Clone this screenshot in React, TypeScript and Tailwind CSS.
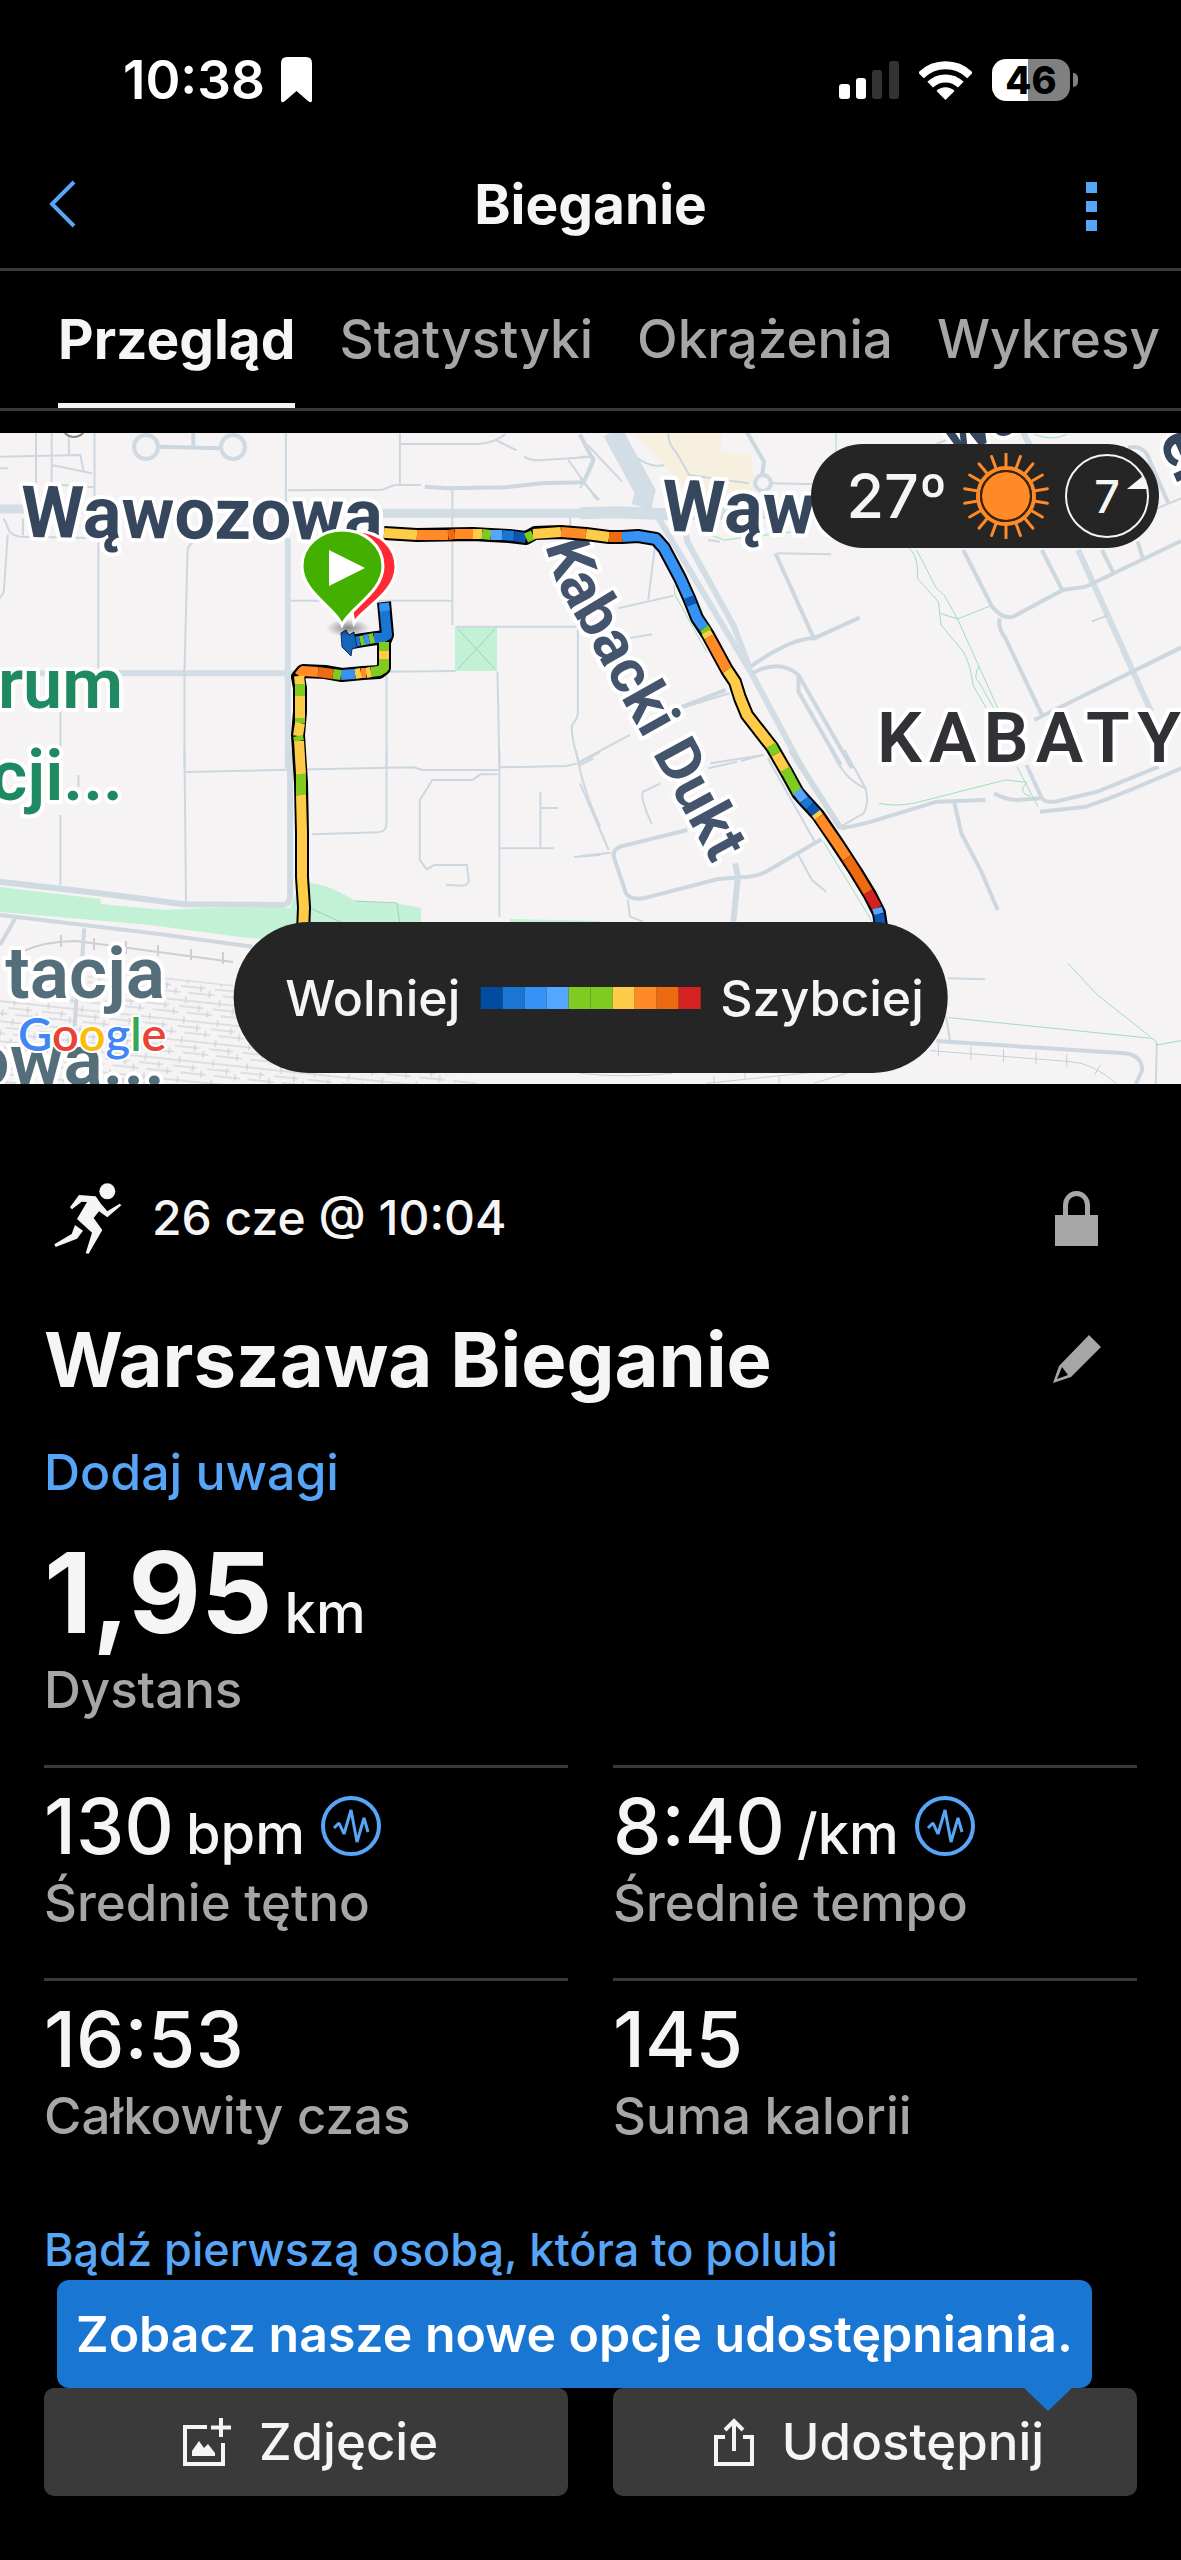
import React from "react";

const BLUE = "#3693f5";
const SKY = "#55a6ff";
const NAVY = "#0d55ad";
const MID = "#1976d2";
const GREEN = "#7fcb1f";
const YELLOW = "#ffcc4a";
const ORANGE = "#ff8a26";
const DEEP = "#ee6a10";
const RED = "#d42222";

const paceScale = ["#004c9f", MID, BLUE, SKY, GREEN, GREEN, YELLOW, ORANGE, DEEP, RED];

const routeOutlines = [
  "M384 169 L387 202 L384 209 L384 235 L379 239 L363 240 L342 242 L325 239 L303 238 L298 244 L300 255 L300 279 L298 302 L301 350 L302 400 L302 444 L304 474 L303 500",
  "M384 204 L363 207 L346 210",
  "M384 100 L417 102 L473 101 L490 102 L509 103 L526 105 L535 100 L561 99 L586 101 L609 104 L622 104 L638 103 L656 106 L664 115 L680 145 L689 165 L697 185 L708 202 L727 237 L735 249 L740 265 L747 282 L772 314 L787 340 L798 360 L806 369 L818 382 L837 410 L856 439 L870 462 L879 480 L882 500",
];

const routeSegments: [string, string][] = [
  [MID, "M384 172 L387 202 L382 205 L374 205"],
  [BLUE, "M384 170 L385 178"],
  [GREEN, "M374 205 L369 206"],
  [BLUE, "M369 206 L364 207"],
  [GREEN, "M364 207 L360 208"],
  [MID, "M360 208 L346 210"],
  [GREEN, "M384 209 L384 218"],
  [YELLOW, "M384 218 L384 227"],
  [GREEN, "M384 226 L384 235 L379 238 L371 239"],
  [YELLOW, "M371 239 L366 240"],
  [ORANGE, "M366 240 L361 240"],
  [YELLOW, "M361 240 L355 241"],
  [BLUE, "M355 241 L341 242"],
  [GREEN, "M341 242 L333 241"],
  [DEEP, "M333 241 L318 239"],
  [ORANGE, "M318 239 L303 238 L299 243"],
  [YELLOW, "M299 243 L300 252"],
  [GREEN, "M300 251 L300 263"],
  [YELLOW, "M300 263 L300 286"],
  [GREEN, "M300 285 L300 290"],
  [YELLOW, "M300 290 L298 303"],
  [GREEN, "M298 303 L299 308"],
  [YELLOW, "M299 308 L301 341"],
  [GREEN, "M301 341 L301 362"],
  [YELLOW, "M301 362 L302 400 L302 444 L304 474 L303 500"],
  [YELLOW, "M384 100 L417 102"],
  [ORANGE, "M417 102 L448 102"],
  [DEEP, "M448 102 L455 101"],
  [ORANGE, "M455 101 L473 101"],
  [YELLOW, "M473 101 L482 101"],
  [GREEN, "M482 101 L491 102"],
  [SKY, "M491 102 L502 102"],
  [MID, "M502 102 L514 103"],
  [NAVY, "M514 103 L526 105"],
  [GREEN, "M526 105 L533 102"],
  [YELLOW, "M533 101 L561 99"],
  [ORANGE, "M561 99 L586 101"],
  [YELLOW, "M586 101 L609 104"],
  [DEEP, "M609 104 L622 104"],
  [BLUE, "M622 104 L638 103 L656 106 L664 115 L680 145 L689 165 L697 185 L704 195"],
  [NAVY, "M689 164 L692 172"],
  [GREEN, "M704 195 L707 199"],
  [YELLOW, "M706 199 L709 204"],
  [ORANGE, "M709 204 L727 237"],
  [YELLOW, "M727 237 L735 249 L740 265 L747 282 L772 314"],
  [GREEN, "M771 312 L776 321"],
  [YELLOW, "M776 321 L787 340"],
  [GREEN, "M785 336 L798 360"],
  [SKY, "M797 358 L804 367"],
  [MID, "M804 367 L810 373"],
  [NAVY, "M810 373 L817 381"],
  [YELLOW, "M816 380 L819 384"],
  [ORANGE, "M819 384 L837 410 L847 425"],
  [DEEP, "M847 425 L856 439 L868 459"],
  [RED, "M868 459 L877 475"],
  [SKY, "M877 475 L879 481"],
  [NAVY, "M879 481 L882 500"],
];

type Layer = { color: string; width: number; d: string };

/* Street layers are digitised per tile; each tile carries its own origin and scale. */
const tiles: { transform: string; layers: Layer[] }[] = [
  {
    transform: "translate(0 -8) scale(.3827 .3333)",
    layers: [
      { color: "#d3dde5", width: 9, d: "M0 252 H230 M1000 265 H1600" },
      { color: "#d3dde5", width: 6, d: "M752 340 V1030 M80 745 H770" },
      {
        color: "#cdd7e0",
        width: 2,
        d: "M94 20 V185 M135 20 V120 L240 145 M135 120 V190 M180 20 V88 M0 95 L210 90 L218 135 M0 130 H20 M160 180 L245 187 M247 20 V250 M747 20 V260 M752 196 L1000 194 L1030 180 H1100 M1045 20 V180 M1045 57 H1250 Q1290 55 1320 28 M1295 45 L1350 76 M1370 95 Q1385 107 1410 106 L1550 95 M1485 105 L1560 225 M1182 185 V600 M760 527 H1182 M257 340 V740 M520 290 L515 340 Q490 360 490 380 L482 740 V1030 M158 860 V1030 M1010 740 V1030 M1010 740 L1190 738 M1190 605 H1510 V860 Q1510 880 1495 900 Q1490 930 1515 1020 M1300 740 L1305 1030 M0 520 L10 500 L20 330 M10 280 L25 320 Q40 340 80 335 L260 340 M60 280 V330 M1490 275 V310",
      },
      {
        color: "#cdd7e0",
        width: 4,
        d: "M1110 185 L1170 190 L1320 187 L1415 175 L1525 172 L1550 105 L1515 28 M415 65 L577 70 M505 20 V65",
      },
    ],
  },
  {
    transform: "translate(580 -8) scale(.3833 .3333)",
    layers: [
      { color: "#d3dde5", width: 20, d: "M85 20 L170 200 L160 245" },
      { color: "#d3dde5", width: 12, d: "M0 265 L100 262 L225 268 L600 262" },
      {
        color: "#d3dde5",
        width: 6,
        d: "M200 270 L450 750 L580 1030 M270 290 L280 350 L400 600 L440 720 M1155 20 L1205 130 M1300 375 L1490 860",
      },
      {
        color: "#cdd7e0",
        width: 4,
        d: "M435 20 L480 110 L475 150 M510 385 L610 640 Q550 640 445 725 M610 640 L730 578 M450 745 Q520 700 570 750 L710 1030 M570 750 V800 L680 1020 M235 860 L380 795 M1000 375 L1075 545 Q1105 585 1130 575 L1260 495 L1320 485 L1568 348 M1095 580 Q1090 610 1110 640 L1205 870 M1185 885 L1568 668 M1205 375 L1258 495 M1362 375 L1390 440 M1455 350 L1468 400 M1430 68 Q1465 60 1480 90 L1535 235",
      },
      {
        color: "#cdd7e0",
        width: 2,
        d: "M0 95 H35 Q45 110 0 190 M20 60 L110 170 M0 160 L50 225 M230 20 Q230 60 250 80 L285 150 L440 175 M150 100 Q190 130 220 120 M500 175 L620 178 M195 370 L178 525 M100 550 L245 512 M115 642 L188 628 M235 860 L390 805 M0 1010 L130 930 M340 1015 L480 990 M1335 590 L1375 572 M515 385 L655 388 M335 345 L365 350 M930 55 L1000 30 M1505 250 L1568 220",
      },
      {
        color: "#9edfbd",
        width: 1,
        d: "M860 370 Q885 400 880 460 L935 530 L942 600 L1000 680 Q1020 720 1025 780 L1065 860 M878 375 L930 490 L950 510 L985 582 L1090 850 M940 565 L985 582 L1070 543 M1040 725 Q1025 760 1040 770 L1080 850 M245 480 L248 510 L330 680 M320 320 L375 345 L560 320 M668 20 V80 M1185 28 Q1230 50 1270 28",
      },
    ],
  },
  {
    transform: "translate(0 317) scale(.3827 .3333)",
    layers: [
      { color: "#d0dae2", width: 6, d: "M0 395 L260 430 L480 463 L740 465 Q758 460 758 440 V0" },
      {
        color: "#cdd7e0",
        width: 2,
        d: "M158 195 V405 M205 75 V110 M482 0 L486 455 M486 66 L1080 52 L1105 60 H1305 M1010 0 V215 Q1010 245 990 247 L815 253 M1305 0 V500 M1305 52 L1480 48 Q1520 40 1568 5 M1505 0 Q1520 110 1568 230 M1300 73 H1255 L1235 90 H1130 L1097 150 V330 L1115 358 L1135 345 H1220 L1225 395 Q1220 407 1205 407 L1165 404 M1412 125 V292 M1412 174 H1458 M1308 295 H1448 M1500 321 L1568 315",
      },
      { color: "#d0d7df", width: 4, d: "M0 495 L400 550 L660 590 M40 505 L0 585 M220 535 L215 620 M200 740 L195 830" },
    ],
  },
  {
    transform: "translate(580 317) scale(.3833 .3333)",
    layers: [
      {
        color: "#cdd7e0",
        width: 4,
        d: "M280 240 L105 290 Q85 300 88 320 L120 430 Q130 450 165 445 L360 387 L420 382 Q460 382 490 362 L630 268 M975 150 L995 250 L1045 360 L1090 480 M680 235 Q720 228 760 215 L930 155 L1058 150 M1080 130 Q1110 150 1140 150 L1200 145 M1165 45 L1205 145 Q1215 158 1240 155 L1350 125 L1510 50 M1200 185 L1320 170 Q1400 140 1568 55 M930 873 L1420 910 Q1465 915 1467 960 L1450 1002",
      },
      { color: "#d0dae2", width: 6, d: "M405 340 L412 380 L400 515 M550 0 L680 235" },
      {
        color: "#cdd7e0",
        width: 2,
        d: "M655 0 Q690 90 745 115 Q755 160 740 190 L680 230 M690 0 L745 115 M0 45 L35 25 M0 100 L75 300 M0 318 L80 308 M335 55 L410 35 M420 33 L475 15 M210 100 L165 125 Q155 140 187 222 M570 315 L605 390 L642 425 M490 25 L615 280 M125 450 L130 500 L165 515 M960 685 L1057 688 M955 800 L965 870 M1505 880 L1502 1002",
      },
      {
        color: "#c9ced6",
        width: 1,
        d: "M915 902 L1280 935 Q1340 940 1400 1002 M935 882 V920 M1020 890 V930 M1105 898 V936 M1190 906 V944 M1270 914 V952 M1358 945 L1342 975 M330 1000 L600 968 M430 970 V990 M610 1000 L700 968 M350 980 V1000 M520 980 V1000 M0 970 Q120 985 240 970",
      },
      {
        color: "#9edfbd",
        width: 1,
        d: "M780 160 Q820 170 870 160 L1110 90 L1165 97 Q1140 130 1175 138 M1140 50 L1195 170 M635 275 L765 520 M962 803 L1490 865 Q1505 870 1505 885 L1568 872 M1273 640 L1350 735 L1490 862",
      },
    ],
  },
];

function MapDrawing() {
  return (
    <svg
      viewBox="0 0 1181 651"
      preserveAspectRatio="xMidYMid slice"
      className="block h-full w-full font-['Roboto',sans-serif]"
      role="img"
      aria-label="Mapa trasy biegu"
    >
      <defs>
        <pattern id="yard" width="34" height="20" patternUnits="userSpaceOnUse" patternTransform="rotate(6)">
          <path d="M0 5H34M0 11H24M8 17H34M6 1V8M20 8V15M29 13V20" stroke="#c8c9d1" strokeWidth="1" fill="none" />
        </pattern>
        <radialGradient id="shadow">
          <stop offset="0" stopColor="#000" stopOpacity=".45" />
          <stop offset="1" stopColor="#000" stopOpacity="0" />
        </radialGradient>
        <path id="kabacki" d="M546 112 C552 145 566 168 583 196 C604 234 634 288 661 336 L726 456" />
      </defs>
      <rect width="1181" height="651" fill="#f5f3f4" />

      <path d="M635 0 H721 V20 H750 L755 50 V60 H690 Z" fill="#f7f0df" />
      <rect x="455" y="194" width="42" height="44" fill="#c3f1d5" />
      <path
        d="M0 454 L100 466 L101 471 L164 477 L206 475 L290 475 L300 450 L311 450 Q330 452 355 468 L400 471 L421 475 V492 L300 510 L240 504 L150 492 L0 479Z"
        fill="#c3f1d5"
      />
      <path d="M510 486 L600 488 V495 H510Z" fill="#c3f1d5" />
      <path d="M0 565 L110 538 L233 552 L300 600 L480 651 H0Z" fill="url(#yard)" />
      <path
        d="M21 519 Q45 508 76 508 L233 529 M61 502 V514 M94 505 V517 M126 508 V521 M158 512 V523 M191 516 V527 M223 519 V531"
        stroke="#cdcfd6"
        strokeWidth="2"
        fill="none"
      />

      {tiles.map((tile) => (
        <g key={tile.transform} transform={tile.transform} fill="none">
          {tile.layers.map((layer) => (
            <path key={layer.d} d={layer.d} stroke={layer.color} strokeWidth={layer.width} vectorEffect="non-scaling-stroke" />
          ))}
        </g>
      ))}
      <g fill="#f5f3f4" stroke="#d0dae2" strokeWidth="4">
        <circle cx="146" cy="14" r="12" />
        <circle cx="233" cy="14" r="12" />
        <circle cx="763" cy="50" r="8" />
      </g>
      <path d="M458 196 L495 236 M495 196 L458 236 M310 475 L345 491 M355 468 L397 470 L400 492" stroke="#a6cdb9" strokeWidth="1" fill="none" />
      <circle cx="74" cy="-8" r="12" fill="#fff" stroke="#8a8a8a" strokeWidth="2" />

      <g fill="#36475d" stroke="#fff" strokeWidth="8" strokeLinejoin="round" className="font-bold [paint-order:stroke]">
        <g fontSize="72">
          <text x="21" y="104" transform="rotate(.5 21 104)">Wąwozowa</text>
          <text x="662" y="98" transform="rotate(1 662 98)">Wąwo</text>
        </g>
        <text fontSize="64" x="952" y="24" transform="rotate(-22 952 24)">wa</text>
        <text fontSize="64" x="1158" y="6" transform="rotate(66 1158 6)">er</text>
        <text fontSize="61" fill="#44546c">
          <textPath href="#kabacki">Kabacki Dukt</textPath>
        </text>
        <text fontSize="71" x="877" y="329" fill="#303236" className="font-semibold tracking-widest">
          KABATY
        </text>
        <g fontSize="70" fill="#1f8a62" textAnchor="end" className="font-semibold">
          <text x="123" y="275">rum</text>
          <text x="123" y="367">cji...</text>
        </g>
        <g fontSize="73" fill="#546e7a" textAnchor="end" className="font-semibold">
          <text x="165" y="565">tacja</text>
          <text x="165" y="652">owa...</text>
        </g>
      </g>
      <text
        x="18"
        y="618"
        fontSize="47"
        stroke="#fff"
        strokeWidth="4"
        className="font-['Lato',sans-serif] font-semibold [paint-order:stroke]"
      >
        <tspan fill="#4285f4">G</tspan>
        <tspan fill="#ea4335">o</tspan>
        <tspan fill="#fbbc05">o</tspan>
        <tspan fill="#4285f4">g</tspan>
        <tspan fill="#34a853">l</tspan>
        <tspan fill="#ea4335">e</tspan>
      </text>

      <g fill="none" strokeLinejoin="round">
        {routeOutlines.map((d) => (
          <path key={d} d={d} stroke="#000" strokeWidth="14" />
        ))}
        {routeSegments.map(([color, d]) => (
          <path key={d} d={d} stroke={color} strokeWidth="10" />
        ))}
      </g>
      <path d="M341 200 L346 197 L349 202 L354 199 L357 214 L352 216 L351 223 L342 214Z" fill="#1565b8" stroke="#0a2f5a" strokeWidth="1" />
      <ellipse cx="348" cy="195" rx="22" ry="9" fill="url(#shadow)" />
      <path d="M354 190 C362 176 396 160 396 134 C396 114 380 99 358 98 L340 110Z" fill="#ff2a33" stroke="#fff" strokeWidth="3" />
      <path
        d="M342 192 C335 174 302 160 302 133 C302 113 320 97 342 97 C365 97 383 113 383 133 C383 160 350 174 342 192Z"
        fill="#43b000"
        stroke="#fff"
        strokeWidth="3"
      />
      <path d="M329 117 L365 135 L329 153Z" fill="#fff" />
    </svg>
  );
}

function SunIcon() {
  return (
    <svg viewBox="-43 -43 86 86" className="h-[86px] w-[86px]" stroke="#ff8a26" fill="none" aria-hidden="true">
      <circle r="24" fill="#ff8a26" stroke="none" />
      <circle r="28" stroke="#ff8a26" strokeWidth="4" />
      <circle r="25" stroke="#3a2410" strokeWidth="2" />
      {Array.from({ length: 18 }, (_, i) => (
        <path key={i} d="M0 -30V-42" strokeWidth="3" strokeLinecap="round" transform={`rotate(${i * 20})`} />
      ))}
    </svg>
  );
}

function WaveIcon() {
  return (
    <svg viewBox="0 0 60 60" className="h-[60px] w-[60px]" fill="none" stroke="#57a5f7" strokeWidth="4" aria-hidden="true">
      <circle cx="30" cy="30" r="28" />
      <path d="M13 32 L18 27 L23 38 L30 14 L36 46 L43 22 L47 36" strokeWidth="3" strokeLinejoin="bevel" />
    </svg>
  );
}

function StatusBar() {
  return (
    <div className="flex h-[160px] items-center justify-between pr-[103px] pl-[123px] text-white">
      <div className="flex items-center gap-4">
        <span className="text-[53px] leading-none font-semibold">10:38</span>
        <svg viewBox="0 0 31 46" className="h-[46px] w-[31px]" fill="currentColor" aria-hidden="true">
          <path d="M6 0H25Q31 0 31 6V43Q31 47 27 44L15.500 34L4 44Q0 47 0 43V6Q0 0 6 0Z" />
        </svg>
      </div>
      <div className="flex items-center gap-5">
        <svg viewBox="0 0 60 38" className="h-[38px] w-[60px]" fill="#fff" aria-hidden="true">
          <rect x="0" y="23" width="11" height="15" rx="3" />
          <rect x="17" y="17" width="10" height="21" rx="3" />
          <rect x="33" y="9" width="10" height="29" rx="3" fill="#333" />
          <rect x="50" y="0" width="10" height="38" rx="3" fill="#333" />
        </svg>
        <svg viewBox="0 0 53 39" className="h-[39px] w-[53px]" fill="none" stroke="#fff" strokeWidth="8" aria-hidden="true">
          <path d="M2 14.500A34.700 34.700 0 0 1 51 14.500M11.200 23.700A21.700 21.700 0 0 1 41.800 23.700" />
          <path d="M26.500 39L17.500 30A12.700 12.700 0 0 1 35.500 30Z" fill="#fff" stroke="none" />
        </svg>
        <div className="flex items-center gap-[3px]">
          <div className="flex h-[42px] w-[78px] items-center justify-center rounded-[14px] bg-linear-to-r from-white from-46% to-[#808080] to-46% text-[38px] leading-none font-extrabold text-black">
            46
          </div>
          <div className="h-[14px] w-[5px] rounded-r-full bg-[#808080]" />
        </div>
      </div>
    </div>
  );
}

const tabs = ["Przegląd", "Statystyki", "Okrążenia", "Wykresy"];

const stats = [
  { value: "130", unit: "bpm", label: "Średnie tętno", wave: true },
  { value: "8:40", unit: "/km", label: "Średnie tempo", wave: true },
  { value: "16:53", label: "Całkowity czas" },
  { value: "145", label: "Suma kalorii" },
];

export default function App() {
  return (
    <div className="min-h-screen overflow-hidden bg-black font-['Inter',sans-serif] text-[#f5f5f5]">
      <StatusBar />
      <header className="grid h-[111px] grid-cols-[1fr_auto_1fr] items-center border-b-[3px] border-[#3a3a3a] px-12 pb-5">
        <button aria-label="Wstecz" className="justify-self-start">
          <svg viewBox="0 0 28 48" className="h-[48px] w-[28px]" fill="none" stroke="#57a5f7" strokeWidth="4" aria-hidden="true">
            <path d="M26 2L4 24L26 46" />
          </svg>
        </button>
        <h1 className="text-[55px] leading-none font-bold">Bieganie</h1>
        <button aria-label="Więcej opcji" className="flex flex-col gap-2 justify-self-end pt-1 pr-9">
          <span className="size-[11px] bg-[#57a5f7]" />
          <span className="size-[11px] bg-[#57a5f7]" />
          <span className="size-[11px] bg-[#57a5f7]" />
        </button>
      </header>

      <nav className="flex h-[140px] gap-11 border-b-[3px] border-[#3a3a3a] pl-[58px] whitespace-nowrap" role="tablist">
        {tabs.map((tab, i) => (
          <button
            key={tab}
            role="tab"
            aria-selected={i === 0}
            className={
              i === 0
                ? "text-[55px] font-bold shadow-[inset_0_-5px_0_#f5f5f5]"
                : "text-[53px] font-medium text-[#a6a6a6]"
            }
          >
            {tab}
          </button>
        ))}
      </nav>

      <section className="relative mt-[22px] h-[651px] overflow-hidden">
        <MapDrawing />
        <div className="absolute top-[11px] right-[22px] flex h-[104px] items-center gap-4 rounded-full bg-[#252525] pr-[10px] pl-[35px]">
          <span className="text-[61px] leading-none font-medium">27º</span>
          <SunIcon />
          <div className="relative flex size-[84px] items-center justify-center">
            <svg viewBox="0 0 84 84" className="absolute inset-0" fill="none" aria-hidden="true">
              <circle cx="42" cy="42" r="41" stroke="#f5f5f5" strokeWidth="2" />
              <path d="M62 35L78 22Q82 28 82 35Z" fill="#f5f5f5" />
            </svg>
            <span className="text-[45px] leading-none font-medium">7</span>
          </div>
        </div>
        <div className="absolute bottom-[11px] left-1/2 flex h-[151px] -translate-x-1/2 items-center gap-5 rounded-full bg-[#252525] pr-6 pl-[52px] text-[50px] leading-none font-medium">
          <span>Wolniej</span>
          <div className="flex h-[22px]">
            {paceScale.map((color, i) => (
              <span key={i} className="w-[22px]" style={{ backgroundColor: color }} />
            ))}
          </div>
          <span>Szybciej</span>
        </div>
      </section>

      <main className="px-[44px] pt-[94px]">
        <div className="flex h-[80px] items-center justify-between pr-[39px] pl-[9px]">
          <div className="flex items-center gap-[30px]">
            <svg viewBox="40 36 207 219" className="h-[73px] w-[69px]" fill="currentColor" aria-hidden="true">
              <circle cx="203" cy="64" r="24" />
              <path d="M118 75L168 79Q182 102 203 124L240 101L245 106L203 142L178 124L162 144L188 180L147 251L138 250L157 188L112 147L142 96L126 95L97 118L91 112Z" />
              <path d="M106 165L130 182L112 206L48 231L44 223L96 192Z" />
            </svg>
            <span className="text-[48px] leading-none font-medium">26 cze @ 10:04</span>
          </div>
          <svg viewBox="0 0 43 55" className="h-[55px] w-[43px]" fill="#a6a6a6" aria-hidden="true">
            <path d="M0 24H43V55H0Z" />
            <path d="M10.500 26V14A11 11.500 0 0 1 32.500 14V26" fill="none" stroke="#a6a6a6" strokeWidth="5" />
          </svg>
        </div>

        <div className="mt-[53px] flex h-[96px] items-center justify-between pr-9">
          <h2 className="text-[76px] leading-none font-bold">Warszawa Bieganie</h2>
          <button aria-label="Edytuj nazwę">
            <svg viewBox="0 0 48 48" className="size-[48px]" fill="#a6a6a6" aria-hidden="true">
              <path d="M36 0L48 12L18 42L0 48L6 31ZM9 32L4 44L15 40Z" fillRule="evenodd" />
            </svg>
          </button>
        </div>

        <button className="mt-[35px] block h-[60px] text-[50px] leading-[60px] font-medium text-[#57a5f7]">Dodaj uwagi</button>

        <div className="mt-[30px] flex h-[120px] items-baseline gap-3 leading-[120px]">
          <span className="text-[112px] font-bold">1,95</span>
          <span className="text-[56px] font-medium">km</span>
        </div>
        <p className="mt-2 text-[51px] leading-[60px] font-medium text-[#a6a6a6]">Dystans</p>

        <dl className="mt-[45px] grid grid-cols-2 gap-[45px]">
          {stats.map((stat) => (
            <div key={stat.label} className="flex flex-col-reverse border-t-[3px] border-[#3a3a3a] pt-3">
              <dt className="mt-[2px] text-[51px] leading-[60px] font-medium text-[#a6a6a6]">{stat.label}</dt>
              <dd className="flex h-[91px] items-center gap-4">
                <span className="flex h-[90px] items-baseline gap-3 leading-[90px]">
                  <span className="text-[77px] font-medium">{stat.value}</span>
                  {stat.unit && <span className="text-[56px] font-medium">{stat.unit}</span>}
                </span>
                {stat.wave && <WaveIcon />}
              </dd>
            </div>
          ))}
        </dl>

        <button className="mt-[74px] block text-[45px] leading-[60px] font-medium text-[#57a5f7]">
          Bądź pierwszą osobą, która to polubi
        </button>

        <div className="relative mt-[108px] grid grid-cols-2 gap-[45px] text-[51px] font-medium">
          <button className="flex h-[108px] items-center justify-center gap-7 rounded-[10px] bg-[#3a3a3a] pl-2">
            <svg viewBox="0 0 49 49" className="size-[49px]" fill="none" stroke="currentColor" strokeWidth="4" aria-hidden="true">
              <path d="M25 9H3V46H41V25M39 0V19M29 9.500H49" />
              <path d="M10 38V33L17 23L22 30L26 26L33 35V38Z" fill="currentColor" stroke="none" />
            </svg>
            Zdjęcie
          </button>
          <button className="flex h-[108px] items-center justify-center gap-7 rounded-[10px] bg-[#3a3a3a] pl-2">
            <svg viewBox="0 0 40 49" className="h-[49px] w-[40px]" fill="none" stroke="currentColor" strokeWidth="4" aria-hidden="true">
              <path d="M11 19H2V46H38V19H29M20 3V33M11 12L20 3L29 12" />
            </svg>
            Udostępnij
          </button>
          <div
            role="tooltip"
            className="absolute right-[45px] bottom-full left-[13px] flex h-[108px] items-center justify-center rounded-[12px] bg-[#1976d2] text-[50px] font-semibold whitespace-nowrap text-white"
          >
            Zobacz nasze nowe opcje udostępniania.
            <span className="absolute top-full right-[20px] h-[23px] w-[48px] bg-[#1976d2] [clip-path:polygon(0_0,100%_0,50%_100%)]" />
          </div>
        </div>
      </main>
    </div>
  );
}
